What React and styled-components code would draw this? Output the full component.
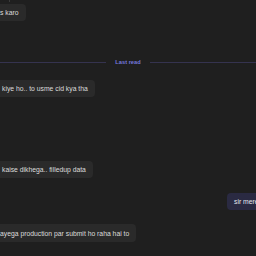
import React from "react";
import styled, { createGlobalStyle } from "styled-components";

const GlobalStyle = createGlobalStyle`
  html, body {
    margin: 0;
    padding: 0;
    background: #1f1f1f;
  }
  body {
    font-family: "Liberation Sans", Arial, sans-serif;
  }
`;

const Screen = styled.div`
  width: 256px;
  height: 256px;
  overflow: hidden;
  background: #1f1f1f;
  position: relative;
`;

const Feed = styled.div`
  display: flex;
  flex-direction: column;
  padding-top: 4px;
`;

const Row = styled.div`
  display: flex;
  justify-content: ${(p) => (p.$own ? "flex-end" : "flex-start")};
  margin-top: ${(p) => p.$top || 0}px;
`;

const Bubble = styled.div`
  box-sizing: border-box;
  height: ${(p) => p.$h || 17}px;
  display: flex;
  align-items: center;
  padding: 0 7px 0 ${(p) => p.$left ?? 2}px;
  border-radius: ${(p) => (p.$own ? "4px 0 0 4px" : "0 4px 4px 0")};
  background: ${(p) => (p.$own ? "#2a2a42" : "#2a2a2a")};
  color: ${(p) => (p.$own ? "#e6e6f0" : "#dcdcdc")};
  font-size: 6.8px;
  line-height: 9px;
  white-space: nowrap;
  ${(p) => p.$own && "width: 29px; padding: 0 0 0 7px; overflow: hidden;"}
`;

const Divider = styled.div`
  display: flex;
  align-items: center;
  gap: 9px;
  height: 10px;
  margin-top: ${(p) => p.$top}px;
`;

const Line = styled.div`
  flex: 1;
  height: 1px;
  background: #35334f;
`;

const DividerLabel = styled.span`
  color: #7478dc;
  font-size: 5.7px;
  font-weight: bold;
  line-height: 10px;
`;

const Thread = styled.div`
  position: absolute;
  left: 9px;
  top: 0;
  width: 1px;
  height: 2px;
  background: #3a3a3a;
`;

export default function App() {
  return (
    <Screen>
      <GlobalStyle />
      <Thread />
      <Feed>
        <Row>
          <Bubble $left={0}>s karo</Bubble>
        </Row>
        <Divider $top={36}>
          <Line />
          <DividerLabel>Last read</DividerLabel>
          <Line />
        </Divider>
        <Row $top={13}>
          <Bubble>kiye ho.. to usme cid kya tha</Bubble>
        </Row>
        <Row $top={64}>
          <Bubble>kaise dikhega.. filledup data</Bubble>
        </Row>
        <Row $own $top={15}>
          <Bubble $own>sir mere</Bubble>
        </Row>
        <Row $top={14}>
          <Bubble $left={0} $h={18}>
            ayega production par submit ho raha hai to
          </Bubble>
        </Row>
      </Feed>
    </Screen>
  );
}
